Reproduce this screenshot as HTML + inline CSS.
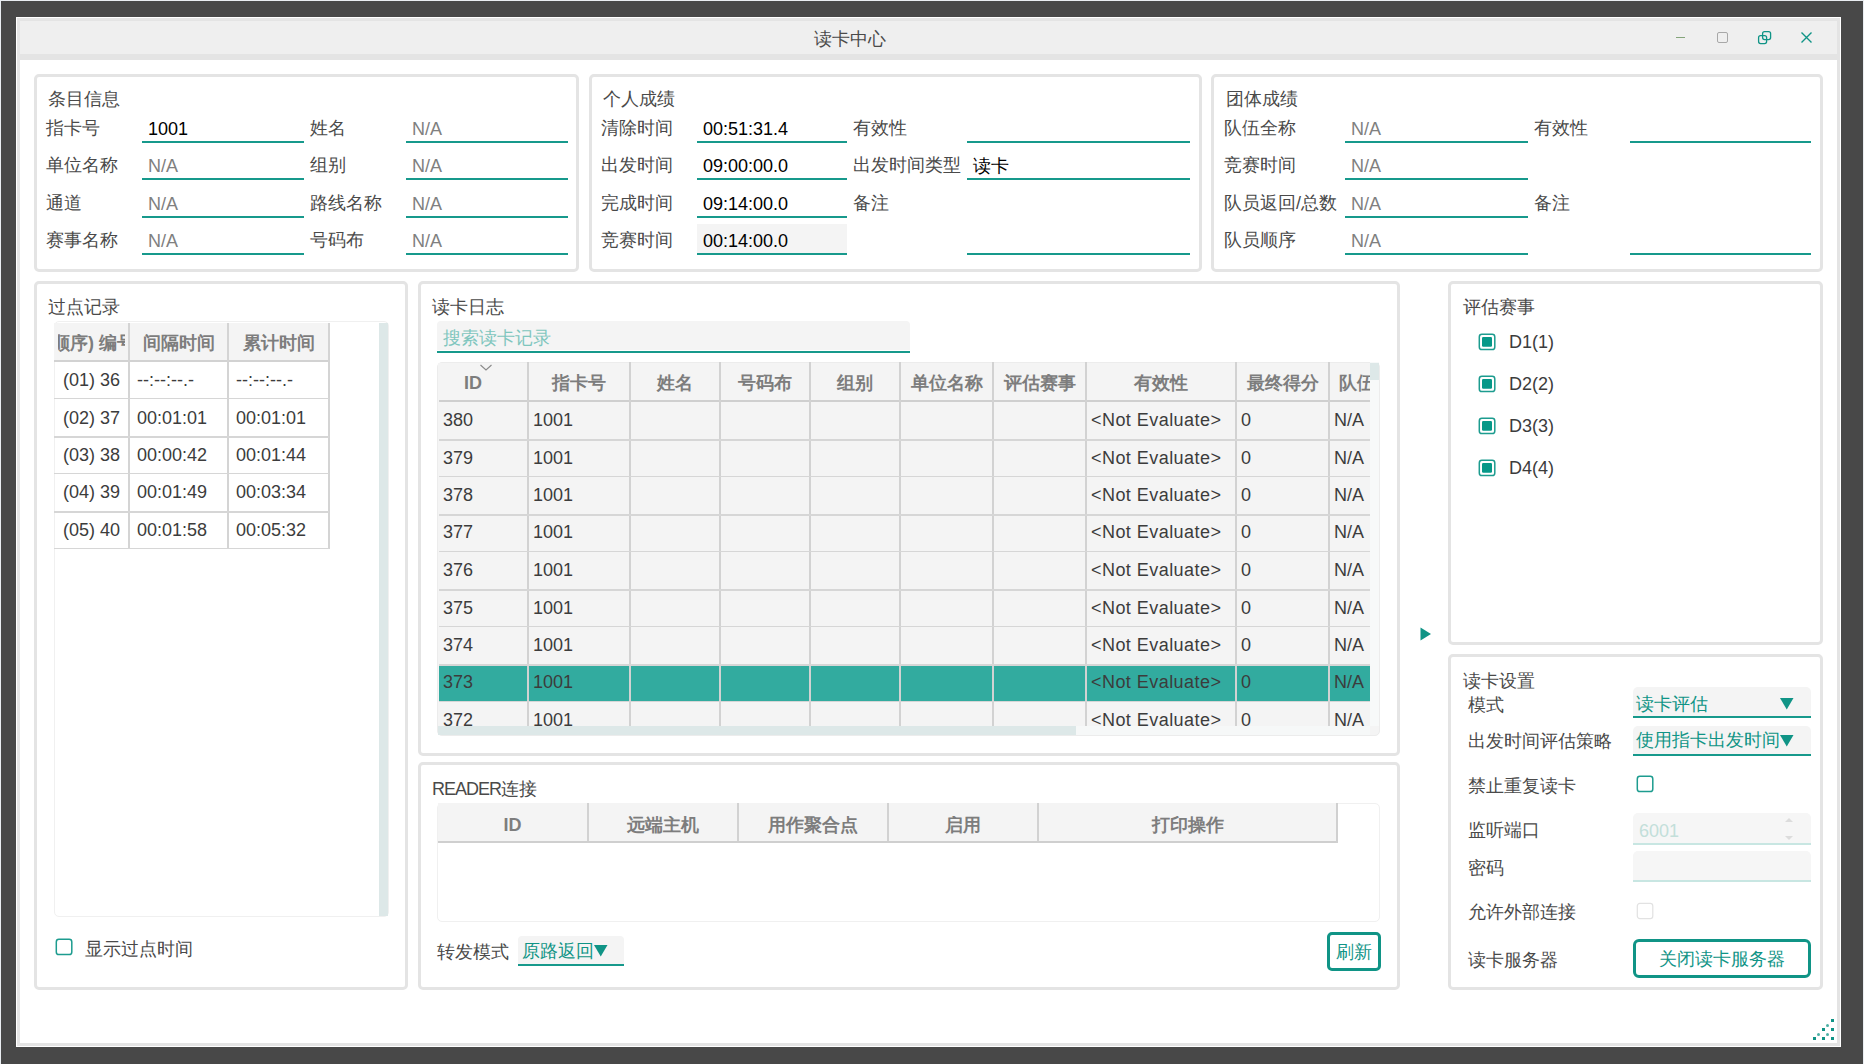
<!DOCTYPE html><html><head><meta charset="utf-8"><style>
*{margin:0;padding:0;box-sizing:border-box}
html,body{width:1864px;height:1064px;overflow:hidden;background:#484848;font-family:"Liberation Sans",sans-serif;font-size:18px;line-height:18px;color:#444}
body>div{position:absolute;white-space:nowrap}
svg{display:block}
.pn{border:3px solid #e4e4e4;border-radius:5px;background:#fff}
.lb{color:#4a4a4a}
.v{color:#000}
.na{color:#808080}
.hd{font-weight:bold;color:#7d7d7d;text-align:center;overflow:hidden}
.cl{color:#3c3c3c}
.ul{background:#17998c}
</style></head><body>
<div style="left:0px;top:0px;width:1864px;height:1px;background:#e9edf1"></div>
<div style="left:0px;top:0px;width:1px;height:1064px;background:#e9edf1"></div>
<div style="left:1863px;top:0px;width:1px;height:1064px;background:#e9edf1"></div>
<div style="left:16px;top:17px;width:1825px;height:1030px;background:#fff"></div>
<div style="left:17px;top:18px;width:1823px;height:1028px;border:3px solid #e4e4e4"></div>
<div style="left:20px;top:21px;width:1817px;height:33px;background:#efefef"></div>
<div style="left:20px;top:54px;width:1817px;height:6px;background:#e4e4e4"></div>
<div class="lb" style="left:814px;top:30px;">读卡中心</div>
<div style="left:1670px;top:26px;width:150px;height:24px"><svg width="150" height="24" viewBox="0 0 150 24"><rect x="6" y="11" width="9" height="1" fill="#84a47a"/><rect x="47.5" y="6.5" width="10" height="10" rx="1.5" fill="none" stroke="#a8a8a8" stroke-width="1"/><rect x="92.6" y="5.6" width="8" height="8" rx="2" fill="none" stroke="#109486" stroke-width="1.3"/><rect x="88.6" y="9.6" width="8" height="8" rx="2" fill="none" stroke="#109486" stroke-width="1.3"/><path d="M131.5 6.5 L141.5 16.5 M141.5 6.5 L131.5 16.5" stroke="#109486" stroke-width="1.4"/></svg></div>
<div class="pn" style="left:34px;top:74px;width:545px;height:198px"></div>
<div class="pn" style="left:589px;top:74px;width:613px;height:198px"></div>
<div class="pn" style="left:1211px;top:74px;width:612px;height:198px"></div>
<div class="pn" style="left:34px;top:281px;width:374px;height:709px"></div>
<div class="pn" style="left:418px;top:281px;width:982px;height:475px"></div>
<div class="pn" style="left:418px;top:762px;width:982px;height:228px"></div>
<div class="pn" style="left:1448px;top:281px;width:375px;height:364px"></div>
<div class="pn" style="left:1448px;top:654px;width:375px;height:336px"></div>
<div class="lb" style="left:48px;top:90px;">条目信息</div>
<div class="lb" style="left:46px;top:119px;">指卡号</div>
<div class="lb" style="left:310px;top:119px;">姓名</div>
<div style="left:142px;top:141px;width:162px;height:2px;background:#17998c"></div>
<div class="v" style="left:148px;top:120px;">1001</div>
<div style="left:406px;top:141px;width:162px;height:2px;background:#17998c"></div>
<div class="na" style="left:412px;top:120px;">N/A</div>
<div class="lb" style="left:46px;top:156px;">单位名称</div>
<div class="lb" style="left:310px;top:156px;">组别</div>
<div style="left:142px;top:178px;width:162px;height:2px;background:#17998c"></div>
<div class="na" style="left:148px;top:157px;">N/A</div>
<div style="left:406px;top:178px;width:162px;height:2px;background:#17998c"></div>
<div class="na" style="left:412px;top:157px;">N/A</div>
<div class="lb" style="left:46px;top:194px;">通道</div>
<div class="lb" style="left:310px;top:194px;">路线名称</div>
<div style="left:142px;top:216px;width:162px;height:2px;background:#17998c"></div>
<div class="na" style="left:148px;top:195px;">N/A</div>
<div style="left:406px;top:216px;width:162px;height:2px;background:#17998c"></div>
<div class="na" style="left:412px;top:195px;">N/A</div>
<div class="lb" style="left:46px;top:231px;">赛事名称</div>
<div class="lb" style="left:310px;top:231px;">号码布</div>
<div style="left:142px;top:253px;width:162px;height:2px;background:#17998c"></div>
<div class="na" style="left:148px;top:232px;">N/A</div>
<div style="left:406px;top:253px;width:162px;height:2px;background:#17998c"></div>
<div class="na" style="left:412px;top:232px;">N/A</div>
<div class="lb" style="left:603px;top:90px;">个人成绩</div>
<div class="lb" style="left:601px;top:119px;">清除时间</div>
<div style="left:697px;top:141px;width:150px;height:2px;background:#17998c"></div>
<div class="v" style="left:703px;top:120px;">00:51:31.4</div>
<div class="lb" style="left:601px;top:156px;">出发时间</div>
<div style="left:697px;top:178px;width:150px;height:2px;background:#17998c"></div>
<div class="v" style="left:703px;top:157px;">09:00:00.0</div>
<div class="lb" style="left:601px;top:194px;">完成时间</div>
<div style="left:697px;top:216px;width:150px;height:2px;background:#17998c"></div>
<div class="v" style="left:703px;top:195px;">09:14:00.0</div>
<div class="lb" style="left:601px;top:231px;">竞赛时间</div>
<div style="left:697px;top:224px;width:150px;height:29px;background:#f4f4f4"></div>
<div style="left:697px;top:253px;width:150px;height:2px;background:#17998c"></div>
<div class="v" style="left:703px;top:232px;">00:14:00.0</div>
<div class="lb" style="left:853px;top:119px;">有效性</div>
<div class="lb" style="left:853px;top:156px;">出发时间类型</div>
<div class="lb" style="left:853px;top:194px;">备注</div>
<div style="left:967px;top:141px;width:223px;height:2px;background:#17998c"></div>
<div style="left:967px;top:178px;width:223px;height:2px;background:#17998c"></div>
<div class="v" style="left:973px;top:157px;">读卡</div>
<div style="left:967px;top:253px;width:223px;height:2px;background:#17998c"></div>
<div class="lb" style="left:1226px;top:90px;">团体成绩</div>
<div class="lb" style="left:1224px;top:119px;">队伍全称</div>
<div style="left:1345px;top:141px;width:183px;height:2px;background:#17998c"></div>
<div class="na" style="left:1351px;top:120px;">N/A</div>
<div class="lb" style="left:1224px;top:156px;">竞赛时间</div>
<div style="left:1345px;top:178px;width:183px;height:2px;background:#17998c"></div>
<div class="na" style="left:1351px;top:157px;">N/A</div>
<div class="lb" style="left:1224px;top:194px;">队员返回/总数</div>
<div style="left:1345px;top:216px;width:183px;height:2px;background:#17998c"></div>
<div class="na" style="left:1351px;top:195px;">N/A</div>
<div class="lb" style="left:1224px;top:231px;">队员顺序</div>
<div style="left:1345px;top:253px;width:183px;height:2px;background:#17998c"></div>
<div class="na" style="left:1351px;top:232px;">N/A</div>
<div class="lb" style="left:1534px;top:119px;">有效性</div>
<div class="lb" style="left:1534px;top:194px;">备注</div>
<div style="left:1630px;top:141px;width:181px;height:2px;background:#17998c"></div>
<div style="left:1630px;top:253px;width:181px;height:2px;background:#17998c"></div>
<div class="lb" style="left:48px;top:298px;">过点记录</div>
<div style="left:54px;top:321px;width:335px;height:596px;border:1px solid #f0f0f0;border-radius:5px"></div>
<div style="left:379px;top:323px;width:9px;height:593px;background:#dde8e8"></div>
<div style="left:54px;top:323px;width:275px;height:37px;background:#f4f4f4"></div>
<div style="left:54px;top:360px;width:275px;height:2px;background:#d2d2d2"></div>
<div style="left:128px;top:323px;width:2px;height:226px;background:#d4d4d4"></div>
<div style="left:227px;top:323px;width:2px;height:226px;background:#d4d4d4"></div>
<div style="left:328px;top:323px;width:2px;height:226px;background:#d4d4d4"></div>
<div style="left:54px;top:398px;width:275px;height:1px;background:#d6d6d6"></div>
<div style="left:54px;top:436px;width:275px;height:2px;background:#d6d6d6"></div>
<div style="left:54px;top:473px;width:275px;height:1px;background:#d6d6d6"></div>
<div style="left:54px;top:511px;width:275px;height:2px;background:#d6d6d6"></div>
<div style="left:54px;top:548px;width:275px;height:1px;background:#d6d6d6"></div>
<div style="left:58px;top:334px;width:67px;height:20px;overflow:hidden"><div class="hd" style="position:absolute;left:-6px;top:0;text-align:left;overflow:visible">顺序) 编号</div></div>
<div class="hd" style="left:130px;top:334px;width:97px">间隔时间</div>
<div class="hd" style="left:229px;top:334px;width:99px">累计时间</div>
<div class="cl" style="left:63px;top:371px;">(01) 36</div>
<div class="cl" style="left:137px;top:371px;">--:--:--.-</div>
<div class="cl" style="left:236px;top:371px;">--:--:--.-</div>
<div class="cl" style="left:63px;top:409px;">(02) 37</div>
<div class="cl" style="left:137px;top:409px;">00:01:01</div>
<div class="cl" style="left:236px;top:409px;">00:01:01</div>
<div class="cl" style="left:63px;top:446px;">(03) 38</div>
<div class="cl" style="left:137px;top:446px;">00:00:42</div>
<div class="cl" style="left:236px;top:446px;">00:01:44</div>
<div class="cl" style="left:63px;top:483px;">(04) 39</div>
<div class="cl" style="left:137px;top:483px;">00:01:49</div>
<div class="cl" style="left:236px;top:483px;">00:03:34</div>
<div class="cl" style="left:63px;top:521px;">(05) 40</div>
<div class="cl" style="left:137px;top:521px;">00:01:58</div>
<div class="cl" style="left:236px;top:521px;">00:05:32</div>
<div style="left:55px;top:938px;width:18px;height:18px"><svg width="18" height="18"><rect x="1.3" y="1.3" width="15.5" height="15.3" rx="2.6" fill="none" stroke="#1d9c8f" stroke-width="1.5"/></svg></div>
<div class="lb" style="left:85px;top:940px;">显示过点时间</div>
<div class="lb" style="left:432px;top:298px;">读卡日志</div>
<div style="left:437px;top:321px;width:473px;height:29px;background:#f4f4f4;border-radius:4px 4px 0 0"></div>
<div style="left:437px;top:351px;width:473px;height:2px;background:#17998c"></div>
<div style="left:443px;top:329px;color:#7fc6be">搜索读卡记录</div>
<div style="left:437px;top:362px;width:943px;height:374px;background:#f4f4f4;border:1px solid #ececec;border-radius:5px"></div>
<div style="left:438px;top:363px;width:932px;height:363px;background:#f4f4f4"></div>
<div style="left:439px;top:400px;width:931px;height:2px;background:#cfcfcf"></div>
<div style="left:439px;top:665px;width:931px;height:36px;background:#32ab9f"></div>
<div style="left:527px;top:362px;width:2px;height:364px;background:#d2d2d2"></div>
<div style="left:629px;top:362px;width:2px;height:364px;background:#d2d2d2"></div>
<div style="left:719px;top:362px;width:2px;height:364px;background:#d2d2d2"></div>
<div style="left:809px;top:362px;width:2px;height:364px;background:#d2d2d2"></div>
<div style="left:899px;top:362px;width:2px;height:364px;background:#d2d2d2"></div>
<div style="left:992px;top:362px;width:2px;height:364px;background:#d2d2d2"></div>
<div style="left:1085px;top:362px;width:2px;height:364px;background:#d2d2d2"></div>
<div style="left:1235px;top:362px;width:2px;height:364px;background:#d2d2d2"></div>
<div style="left:1328px;top:362px;width:2px;height:364px;background:#d2d2d2"></div>
<div style="left:439px;top:439px;width:931px;height:2px;background:#d6d6d6"></div>
<div style="left:439px;top:476px;width:931px;height:1px;background:#d6d6d6"></div>
<div style="left:439px;top:514px;width:931px;height:2px;background:#d6d6d6"></div>
<div style="left:439px;top:551px;width:931px;height:1px;background:#d6d6d6"></div>
<div style="left:439px;top:589px;width:931px;height:2px;background:#d6d6d6"></div>
<div style="left:439px;top:626px;width:931px;height:1px;background:#d6d6d6"></div>
<div style="left:439px;top:664px;width:931px;height:2px;background:#d6d6d6"></div>
<div style="left:439px;top:701px;width:931px;height:1px;background:#d6d6d6"></div>
<div class="hd" style="left:437px;top:374px;width:72px">ID</div>
<div class="hd" style="left:529px;top:374px;width:100px">指卡号</div>
<div class="hd" style="left:631px;top:374px;width:88px">姓名</div>
<div class="hd" style="left:721px;top:374px;width:88px">号码布</div>
<div class="hd" style="left:811px;top:374px;width:88px">组别</div>
<div class="hd" style="left:901px;top:374px;width:91px">单位名称</div>
<div class="hd" style="left:994px;top:374px;width:91px">评估赛事</div>
<div class="hd" style="left:1087px;top:374px;width:148px">有效性</div>
<div class="hd" style="left:1237px;top:374px;width:91px">最终得分</div>
<div class="hd" style="left:1330px;top:374px;width:40px;text-align:left;padding-left:9px">队伍</div>
<div style="left:479px;top:364px;width:14px;height:8px"><svg width="14" height="8"><path d="M1.5 1 L7 6 L12.5 1" fill="none" stroke="#8a8a8a" stroke-width="1.1"/></svg></div>
<div style="left:437px;top:402px;width:933px;height:324px;overflow:hidden">
<div class="cl" style="position:absolute;left:6px;top:9px">380</div>
<div class="cl" style="position:absolute;left:96px;top:9px">1001</div>
<div class="cl" style="position:absolute;left:654px;top:9px"><span style="letter-spacing:.45px">&lt;Not Evaluate&gt;</span></div>
<div class="cl" style="position:absolute;left:804px;top:9px">0</div>
<div class="cl" style="position:absolute;left:897px;top:9px">N/A</div>
<div class="cl" style="position:absolute;left:6px;top:47px">379</div>
<div class="cl" style="position:absolute;left:96px;top:47px">1001</div>
<div class="cl" style="position:absolute;left:654px;top:47px"><span style="letter-spacing:.45px">&lt;Not Evaluate&gt;</span></div>
<div class="cl" style="position:absolute;left:804px;top:47px">0</div>
<div class="cl" style="position:absolute;left:897px;top:47px">N/A</div>
<div class="cl" style="position:absolute;left:6px;top:84px">378</div>
<div class="cl" style="position:absolute;left:96px;top:84px">1001</div>
<div class="cl" style="position:absolute;left:654px;top:84px"><span style="letter-spacing:.45px">&lt;Not Evaluate&gt;</span></div>
<div class="cl" style="position:absolute;left:804px;top:84px">0</div>
<div class="cl" style="position:absolute;left:897px;top:84px">N/A</div>
<div class="cl" style="position:absolute;left:6px;top:121px">377</div>
<div class="cl" style="position:absolute;left:96px;top:121px">1001</div>
<div class="cl" style="position:absolute;left:654px;top:121px"><span style="letter-spacing:.45px">&lt;Not Evaluate&gt;</span></div>
<div class="cl" style="position:absolute;left:804px;top:121px">0</div>
<div class="cl" style="position:absolute;left:897px;top:121px">N/A</div>
<div class="cl" style="position:absolute;left:6px;top:159px">376</div>
<div class="cl" style="position:absolute;left:96px;top:159px">1001</div>
<div class="cl" style="position:absolute;left:654px;top:159px"><span style="letter-spacing:.45px">&lt;Not Evaluate&gt;</span></div>
<div class="cl" style="position:absolute;left:804px;top:159px">0</div>
<div class="cl" style="position:absolute;left:897px;top:159px">N/A</div>
<div class="cl" style="position:absolute;left:6px;top:197px">375</div>
<div class="cl" style="position:absolute;left:96px;top:197px">1001</div>
<div class="cl" style="position:absolute;left:654px;top:197px"><span style="letter-spacing:.45px">&lt;Not Evaluate&gt;</span></div>
<div class="cl" style="position:absolute;left:804px;top:197px">0</div>
<div class="cl" style="position:absolute;left:897px;top:197px">N/A</div>
<div class="cl" style="position:absolute;left:6px;top:234px">374</div>
<div class="cl" style="position:absolute;left:96px;top:234px">1001</div>
<div class="cl" style="position:absolute;left:654px;top:234px"><span style="letter-spacing:.45px">&lt;Not Evaluate&gt;</span></div>
<div class="cl" style="position:absolute;left:804px;top:234px">0</div>
<div class="cl" style="position:absolute;left:897px;top:234px">N/A</div>
<div class="cl" style="position:absolute;left:6px;top:271px">373</div>
<div class="cl" style="position:absolute;left:96px;top:271px">1001</div>
<div class="cl" style="position:absolute;left:654px;top:271px"><span style="letter-spacing:.45px">&lt;Not Evaluate&gt;</span></div>
<div class="cl" style="position:absolute;left:804px;top:271px">0</div>
<div class="cl" style="position:absolute;left:897px;top:271px">N/A</div>
<div class="cl" style="position:absolute;left:6px;top:309px">372</div>
<div class="cl" style="position:absolute;left:96px;top:309px">1001</div>
<div class="cl" style="position:absolute;left:654px;top:309px"><span style="letter-spacing:.45px">&lt;Not Evaluate&gt;</span></div>
<div class="cl" style="position:absolute;left:804px;top:309px">0</div>
<div class="cl" style="position:absolute;left:897px;top:309px">N/A</div>
</div>
<div style="left:1370px;top:362px;width:9px;height:364px;background:#f7f9f9"></div>
<div style="left:1370px;top:363px;width:9px;height:17px;background:#dde8e8"></div>
<div style="left:438px;top:726px;width:932px;height:9px;background:#f6f8f8"></div>
<div style="left:438px;top:726px;width:638px;height:9px;background:#dde8e8"></div>
<div class="lb" style="left:432px;top:780px;"><span style="letter-spacing:-1px">READER</span>连接</div>
<div style="left:437px;top:803px;width:943px;height:119px;border:1px solid #f0f0f0;border-radius:5px"></div>
<div style="left:438px;top:803px;width:900px;height:38px;background:#f4f4f4"></div>
<div style="left:438px;top:841px;width:900px;height:2px;background:#cfcfcf"></div>
<div style="left:1336px;top:803px;width:2px;height:40px;background:#d0d0d0"></div>
<div style="left:587px;top:803px;width:2px;height:38px;background:#d2d2d2"></div>
<div style="left:737px;top:803px;width:2px;height:38px;background:#d2d2d2"></div>
<div style="left:887px;top:803px;width:2px;height:38px;background:#d2d2d2"></div>
<div style="left:1037px;top:803px;width:2px;height:38px;background:#d2d2d2"></div>
<div class="hd" style="left:438px;top:816px;width:149px">ID</div>
<div class="hd" style="left:589px;top:816px;width:148px">远端主机</div>
<div class="hd" style="left:739px;top:816px;width:148px">用作聚合点</div>
<div class="hd" style="left:889px;top:816px;width:148px">启用</div>
<div class="hd" style="left:1039px;top:816px;width:297px">打印操作</div>
<div class="lb" style="left:437px;top:943px;">转发模式</div>
<div style="left:518px;top:936px;width:106px;height:29px;background:#f4f4f4;border-radius:4px 4px 0 0"></div>
<div style="left:518px;top:964px;width:106px;height:2px;background:#17998c"></div>
<div style="left:522px;top:942px;color:#109486">原路返回</div>
<div style="left:594px;top:945px;width:14px;height:12px"><svg width="14" height="12"><path d="M0 0 H13.5 L6.75 11.5Z" fill="#109486"/></svg></div>
<div style="left:1327px;top:932px;width:54px;height:39px;border:3px solid #109486;border-radius:5px;color:#109486;text-align:center;line-height:35px">刷新</div>
<div class="lb" style="left:1463px;top:298px;">评估赛事</div>
<div style="left:1478px;top:333px;width:18px;height:18px"><svg width="18" height="18"><rect x="1.3" y="1.3" width="15.5" height="15.3" rx="2.6" fill="none" stroke="#1d9c8f" stroke-width="1.5"/><rect x="4" y="4" width="10" height="9.7" rx="1.2" fill="#069888"/></svg></div>
<div class="cl" style="left:1509px;top:333px;">D1(1)</div>
<div style="left:1478px;top:375px;width:18px;height:18px"><svg width="18" height="18"><rect x="1.3" y="1.3" width="15.5" height="15.3" rx="2.6" fill="none" stroke="#1d9c8f" stroke-width="1.5"/><rect x="4" y="4" width="10" height="9.7" rx="1.2" fill="#069888"/></svg></div>
<div class="cl" style="left:1509px;top:375px;">D2(2)</div>
<div style="left:1478px;top:417px;width:18px;height:18px"><svg width="18" height="18"><rect x="1.3" y="1.3" width="15.5" height="15.3" rx="2.6" fill="none" stroke="#1d9c8f" stroke-width="1.5"/><rect x="4" y="4" width="10" height="9.7" rx="1.2" fill="#069888"/></svg></div>
<div class="cl" style="left:1509px;top:417px;">D3(3)</div>
<div style="left:1478px;top:459px;width:18px;height:18px"><svg width="18" height="18"><rect x="1.3" y="1.3" width="15.5" height="15.3" rx="2.6" fill="none" stroke="#1d9c8f" stroke-width="1.5"/><rect x="4" y="4" width="10" height="9.7" rx="1.2" fill="#069888"/></svg></div>
<div class="cl" style="left:1509px;top:459px;">D4(4)</div>
<div style="left:1420px;top:627px;width:12px;height:14px"><svg width="12" height="14"><path d="M0.5 0.5 L11 7 L0.5 13.5Z" fill="#109486"/></svg></div>
<div class="lb" style="left:1463px;top:672px;">读卡设置</div>
<div class="lb" style="left:1468px;top:696px;">模式</div>
<div style="left:1633px;top:687px;width:178px;height:30px;background:#f4f4f4;border-radius:5px 5px 0 0"></div>
<div style="left:1633px;top:716px;width:178px;height:2px;background:#17998c"></div>
<div style="left:1636px;top:695px;color:#109486">读卡评估</div>
<div style="left:1780px;top:698px;width:14px;height:12px"><svg width="14" height="12"><path d="M0 0 H13.5 L6.75 11.5Z" fill="#109486"/></svg></div>
<div class="lb" style="left:1468px;top:732px;">出发时间评估策略</div>
<div style="left:1633px;top:726px;width:178px;height:29px;background:#f4f4f4;border-radius:5px 5px 0 0"></div>
<div style="left:1633px;top:754px;width:178px;height:2px;background:#17998c"></div>
<div style="left:1636px;top:731px;color:#109486">使用指卡出发时间</div>
<div style="left:1780px;top:735px;width:14px;height:12px"><svg width="14" height="12"><path d="M0 0 H13.5 L6.75 11.5Z" fill="#109486"/></svg></div>
<div class="lb" style="left:1468px;top:777px;">禁止重复读卡</div>
<div style="left:1636px;top:775px;width:18px;height:18px"><svg width="18" height="18"><rect x="1.3" y="1.3" width="15.5" height="15.3" rx="2.6" fill="none" stroke="#1d9c8f" stroke-width="1.5"/></svg></div>
<div class="lb" style="left:1468px;top:821px;">监听端口</div>
<div style="left:1633px;top:813px;width:178px;height:30px;background:#f6f6f6;border-radius:5px 5px 0 0"></div>
<div style="left:1633px;top:843px;width:178px;height:2px;background:#c8e6e2"></div>
<div style="left:1639px;top:822px;color:#c3dfda">6001</div>
<div style="left:1783px;top:816px;width:12px;height:26px"><svg width="12" height="26"><path d="M2 6 L6 2 L10 6Z M2 20 L6 24 L10 20Z" fill="#dcdcdc"/></svg></div>
<div class="lb" style="left:1468px;top:859px;">密码</div>
<div style="left:1633px;top:851px;width:178px;height:30px;background:#f6f6f6;border-radius:5px 5px 0 0"></div>
<div style="left:1633px;top:880px;width:178px;height:2px;background:#c8e6e2"></div>
<div class="lb" style="left:1468px;top:903px;">允许外部连接</div>
<div style="left:1636px;top:902px;width:18px;height:18px"><svg width="18" height="18"><rect x="1.3" y="1.3" width="15.5" height="15.3" rx="2.6" fill="none" stroke="#e2e2e2" stroke-width="1.2"/></svg></div>
<div class="lb" style="left:1468px;top:951px;">读卡服务器</div>
<div style="left:1633px;top:939px;width:178px;height:39px;border:3px solid #109486;border-radius:6px;color:#109486;text-align:center;line-height:35px">关闭读卡服务器</div>
<div style="left:1813px;top:1037px;width:3px;height:3px;background:#109486"></div>
<div style="left:1822px;top:1037px;width:3px;height:3px;background:#109486"></div>
<div style="left:1831px;top:1037px;width:3px;height:3px;background:#109486"></div>
<div style="left:1822px;top:1028px;width:3px;height:3px;background:#109486"></div>
<div style="left:1831px;top:1028px;width:3px;height:3px;background:#109486"></div>
<div style="left:1831px;top:1019px;width:3px;height:3px;background:#109486"></div>
<div style="left:1817px;top:1033px;width:3px;height:3px;background:#109486;border-radius:50%;opacity:.75"></div>
<div style="left:1826px;top:1033px;width:3px;height:3px;background:#109486;border-radius:50%;opacity:.75"></div>
<div style="left:1826px;top:1024px;width:3px;height:3px;background:#109486;border-radius:50%;opacity:.75"></div>
</body></html>
